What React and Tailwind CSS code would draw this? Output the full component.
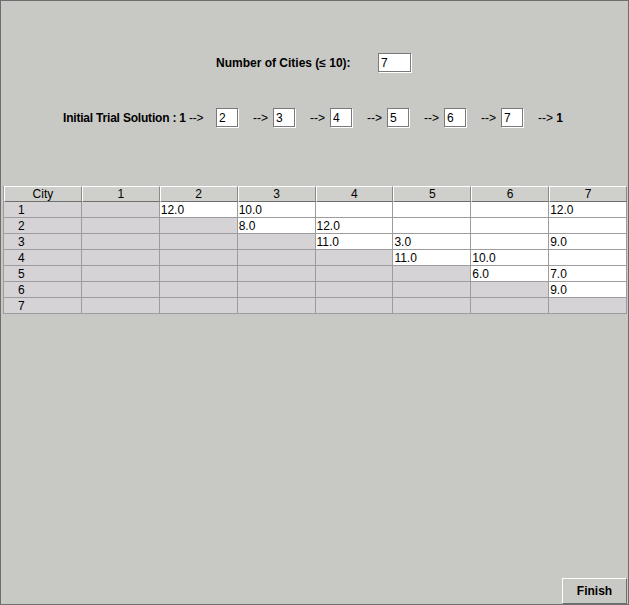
import React from 'react';

const font = { fontFamily: '"Liberation Sans", Arial, sans-serif' };

const cols = ['City', '1', '2', '3', '4', '5', '6', '7'];

// distance matrix (upper triangle editable)
const values = {
  '1-2': '12.0', '1-3': '10.0', '1-7': '12.0',
  '2-3': '8.0', '2-4': '12.0',
  '3-4': '11.0', '3-5': '3.0', '3-7': '9.0',
  '4-5': '11.0', '4-6': '10.0',
  '5-6': '6.0', '5-7': '7.0',
  '6-7': '9.0',
};

function Field({ value, width = 'w-[22px]' }) {
  return (
    <div className={`${width} shrink-0 h-[19px] bg-white border border-[#7a7a7a] shadow-[1px_1px_0_#ffffff] flex items-center pl-[2px] text-[12px] text-black leading-none`}>
      {value}
    </div>
  );
}

function Arrow() {
  return <span className="inline-block shrink-0 text-[12px] text-black w-[20px] ml-[15px] whitespace-nowrap">--&gt;</span>;
}

export default function App() {
  return (
    <div className="w-[629px] h-[605px] bg-[#c8c8c4] border border-[#6e6e6e] flex flex-col" style={font}>
      {/* number of cities */}
      <div className="flex items-center pl-[215px] mt-[52px]">
        <span className="w-[162px] text-[12px] font-bold text-black">Number of Cities (≤ 10):</span>
        <Field value="7" width="w-[33px]" />
      </div>

      {/* initial trial solution */}
      <div className="flex items-center pl-[62px] mt-[36px]">
        <span className="w-[153px] shrink-0 text-[12px] text-black whitespace-nowrap tracking-[-0.2px]">
          <b>Initial Trial Solution : 1</b> --&gt;
        </span>
        <Field value="2" />
        <Arrow />
        <Field value="3" />
        <Arrow />
        <Field value="4" />
        <Arrow />
        <Field value="5" />
        <Arrow />
        <Field value="6" />
        <Arrow />
        <Field value="7" />
        <span className="text-[12px] text-black ml-[15px] whitespace-nowrap">--&gt; <b>1</b></span>
      </div>

      {/* distance table */}
      <div className="mx-[2px] mt-[59px] w-[624px] border-l border-[#9c9c9c] text-[12px] text-black">
        <div className="grid grid-cols-8 h-[16px]">
          {cols.map((c) => (
            <div key={c} className="bg-[#cfcfcb] border-t border-l border-t-white border-l-white border-r border-b border-r-[#8a8a8a] border-b-[#6e6e6e] flex items-center justify-center leading-none">
              {c}
            </div>
          ))}
        </div>
        {[1, 2, 3, 4, 5, 6, 7].map((r) => (
          <div key={r} className="grid grid-cols-8 h-[16px]">
            <div className="bg-[#d6d3d6] border-r border-b border-[#9c9c9c] flex items-center pl-[14px] leading-none">{r}</div>
            {[1, 2, 3, 4, 5, 6, 7].map((c) => (
              <div
                key={c}
                className={`${c > r ? 'bg-white' : 'bg-[#d6d3d6]'} border-r border-b border-[#9c9c9c] flex items-center pl-[1px] leading-none`}
              >
                {values[`${r}-${c}`] || ''}
              </div>
            ))}
          </div>
        ))}
      </div>

      {/* footer */}
      <div className="mt-auto flex justify-end pr-[1px]">
        <button className="w-[65px] h-[26px] bg-[#c8c8c4] border border-t-white border-l-white border-r-[#6e6e6e] border-b-[#6e6e6e] text-[12px] font-bold text-black">
          Finish
        </button>
      </div>
    </div>
  );
}
